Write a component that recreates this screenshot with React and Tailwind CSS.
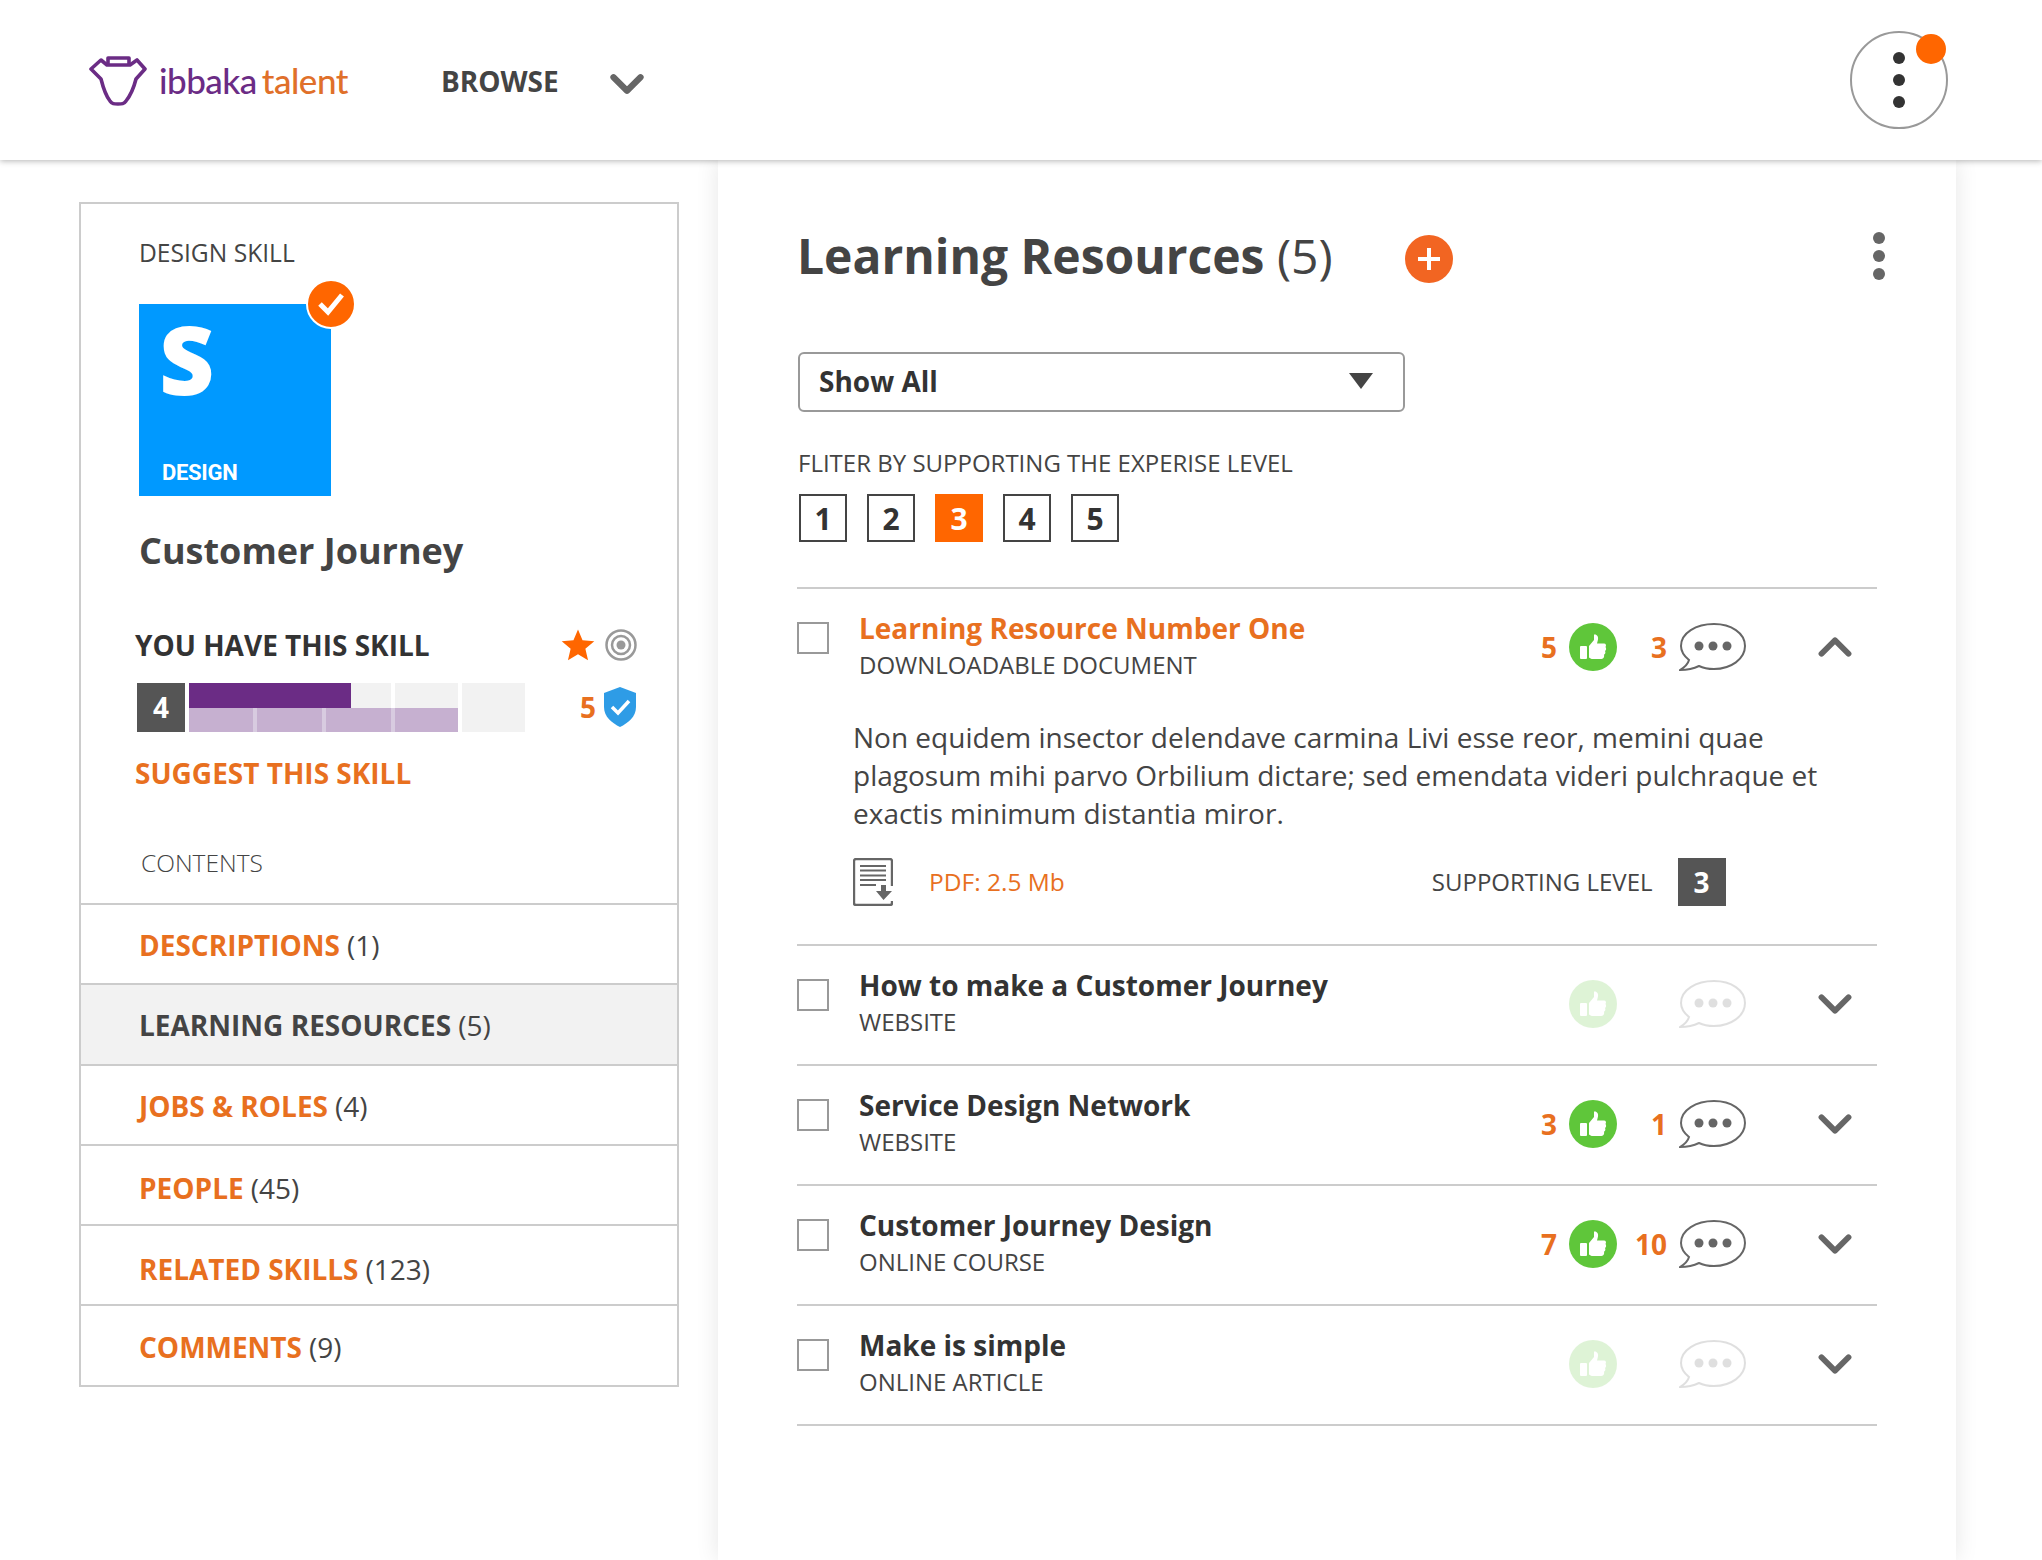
import { ChevronDown, ChevronUp } from 'lucide-react';

const Thumb = ({ muted }) => (
  <div className={`flex h-[48px] w-[48px] items-center justify-center rounded-full bg-[#5fc63a] ${muted ? 'opacity-20' : ''}`}>
    <svg width="28" height="28" viewBox="0 0 28 28" fill="#fff">
      <rect x="1" y="13" width="7" height="13" rx="1" />
      <path d="M10 13 L15 7 V1.5 C18 1 19.5 3.5 19 6.5 L18 10.5 H25 C27 10.5 27.5 12.5 26.5 14 C27.5 15.5 27.3 17 26 18 C26.8 19.5 26.3 21 25 21.8 C25.5 23.5 24.8 26 22.5 26 H14 C12 26 11 25.3 10 24.5 Z" />
    </svg>
  </div>
);

const Bubble = ({ muted }) => (
  <svg width="68" height="50" viewBox="0 0 68 50" className={muted ? 'opacity-20' : ''}>
    <path
      d="M35 2 C52 2 66 11 66 24 C66 37 52 47 35 47 C29 47 24 46 20 44 C14 47 8 48 1 48 C6 45 9 42 10 38 C5 34 2 29 2 24 C2 11 17 2 35 2 Z"
      fill="#fff"
      stroke="#666"
      strokeWidth="2"
    />
    <circle cx="20" cy="24" r="4.5" fill="#666" />
    <circle cx="34" cy="24" r="4.5" fill="#666" />
    <circle cx="48" cy="24" r="4.5" fill="#666" />
  </svg>
);

const resources = [
  { title: 'How to make a Customer Journey', type: 'WEBSITE', muted: true },
  { title: 'Service Design Network', type: 'WEBSITE', likes: 3, comments: 1 },
  { title: 'Customer Journey Design', type: 'ONLINE COURSE', likes: 7, comments: 10 },
  { title: 'Make is simple', type: 'ONLINE ARTICLE', muted: true },
];

const contents = [
  { label: 'DESCRIPTIONS', count: 1, offset: 'pt-[2px]' },
  { label: 'LEARNING RESOURCES', count: 5, active: true, offset: 'pt-[2px]' },
  { label: 'JOBS & ROLES', count: 4, offset: 'pt-[2px]' },
  { label: 'PEOPLE', count: 45, offset: 'pt-[6px]' },
  { label: 'RELATED SKILLS', count: 123, offset: 'pt-[7px]' },
  { label: 'COMMENTS', count: 9, offset: 'pt-[3px]' },
];

const ResourceRow = ({ title, type, likes, comments, muted, open }) => (
  <div className="flex h-[118px] items-start">
    <div className="mt-[33px] h-[32px] w-[32px] border-2 border-[#999]" />
    <div className="ml-[30px] pt-[21px]">
      <div className={`text-[28px] leading-[36px] font-bold ${open ? 'text-[#e8701f]' : 'text-[#333]'}`}>{title}</div>
      <div className="mt-[1px] text-[24px] leading-[36px] text-[#444]">{type}</div>
    </div>
    <div className="ml-auto mt-[31px] flex items-center pr-[15px]">
      <span className="mr-[12px] text-[28px] font-bold text-[#e8701f]">{likes}</span>
      <Thumb muted={muted} />
      <span className="mr-[12px] w-[50px] text-right text-[28px] font-bold text-[#e8701f]">{comments}</span>
      <Bubble muted={muted} />
      {open ? (
        <ChevronUp className="ml-[61px] text-[#666]" size={54} strokeWidth={2.6} />
      ) : (
        <ChevronDown className="ml-[61px] text-[#666]" size={54} strokeWidth={2.6} />
      )}
    </div>
  </div>
);

export default function App() {
  return (
    <div className="h-[1560px] overflow-hidden bg-white font-['Open_Sans',sans-serif] text-[#444]">
      {/* Header */}
      <header className="relative z-10 flex h-[160px] items-center bg-white pl-[89px] pr-[94px] shadow-[0_1px_6px_rgba(0,0,0,0.3)]">
        <svg className="mt-[1px]" width="58" height="50" viewBox="0 0 58 50" fill="none" stroke="#6b2c85" strokeWidth="3.6" strokeLinejoin="round">
          <path d="M2 13 L12 4 L18 9 H41 L48 4 L56 13 L47 23 C45 31 41 40 37 45 C35 48 33 48 29 48 C25 48 23 48 21 45 C17 40 14 31 12 23 Z" />
          <path d="M19 9 V2 H40 V9" />
        </svg>
        <div className="-mt-[1px] ml-[12px] font-['Lato',sans-serif] text-[35px] leading-[40px] font-medium tracking-[-0.5px]">
          <span className="text-[#6b2c85]">ibbaka</span>
          <span className="ml-[5px] text-[#e0702a]">talent</span>
        </div>
        <span className="ml-[93px] mt-[2px] text-[28px] font-bold text-[#444]">BROWSE</span>
        <ChevronDown className="ml-[41px] mt-[8px] text-[#666]" size={54} strokeWidth={2.8} />
        <div className="relative ml-auto flex h-[98px] w-[98px] flex-col items-center justify-center gap-[10px] rounded-full border-2 border-[#999]">
          <span className="h-[12px] w-[12px] rounded-full bg-[#333]" />
          <span className="h-[12px] w-[12px] rounded-full bg-[#333]" />
          <span className="h-[12px] w-[12px] rounded-full bg-[#333]" />
          <span className="absolute right-[0px] top-[1px] h-[30px] w-[30px] rounded-full bg-[#ff6600]" />
        </div>
      </header>

      <div className="flex items-start">
        {/* Skill sidebar */}
        <aside className="ml-[79px] mt-[42px] w-[600px] border-2 border-[#ccc]">
          <div className="pl-[58px] pt-[31px]">
            <div className="text-[24.6px] leading-[36px] text-[#444]">DESIGN SKILL</div>
            <div className="relative mt-[33px] h-[192px] w-[192px] bg-[#0099ff] pl-[20px] text-white">
              <div className="text-[96px] leading-[108px] font-extrabold">S</div>
              <div className="ml-[3px] mt-[46px] font-['Roboto',sans-serif] text-[22px] leading-[30px] font-bold tracking-[-0.3px]">DESIGN</div>
              <div className="absolute -right-[25px] -top-[25px] flex h-[50px] w-[50px] items-center justify-center rounded-full border-2 border-white bg-[#ff6600]">
                <svg width="28" height="24" viewBox="0 0 28 24" fill="none" stroke="#fff" strokeWidth="5">
                  <path d="M3 12 L11 20 L25 3" />
                </svg>
              </div>
            </div>
            <h2 className="mt-[31px] text-[36px] leading-[48px] font-bold text-[#444]">Customer Journey</h2>
          </div>

          <div className="mt-[50px] flex h-[40px] items-center pl-[54px] pr-[40px]">
            <span className="text-[28px] font-bold text-[#333]">YOU HAVE THIS SKILL</span>
            <svg className="ml-auto" width="34" height="34" viewBox="0 0 24 24" fill="#ff6600">
              <path d="M12 1 L15.2 8.6 L23.5 9.3 L17.2 14.7 L19.1 22.8 L12 18.5 L4.9 22.8 L6.8 14.7 L0.5 9.3 L8.8 8.6 Z" />
            </svg>
            <svg className="ml-[10px]" width="32" height="32" viewBox="0 0 32 32" fill="none" stroke="#999" strokeWidth="2.5">
              <circle cx="16" cy="16" r="14.5" />
              <circle cx="16" cy="16" r="9" />
              <circle cx="16" cy="16" r="4.5" fill="#999" stroke="none" />
            </svg>
          </div>

          <div className="mt-[17px] flex h-[50px] items-center pl-[56px] pr-[41px]">
            <div className="flex h-[49px] w-[48px] items-center justify-center bg-[#555] text-[28px] font-bold text-white">4</div>
            <div className="relative ml-[4px] h-[49px] w-[336px]">
              <div className="absolute bottom-0 left-0 h-[24px] w-[268px] bg-[#d8cbe0]" />
              <div className="relative grid h-full grid-cols-[64px_65px_65px_63px_63px] gap-x-[4px]">
                {[0, 1, 2, 3, 4].map((i) => (
                  <div key={i} className="flex flex-col">
                    <div className="h-[25px] bg-[#f2f2f2]" />
                    <div className={`h-[24px] ${i < 4 ? 'bg-[#c6b0d0]' : 'bg-[#f2f2f2]'}`} />
                  </div>
                ))}
              </div>
              <div className="absolute left-0 top-0 h-[25px] w-[162px] bg-[#6b2c85]" />
            </div>
            <span className="ml-auto text-[28px] font-bold text-[#e8701f]">5</span>
            <svg className="ml-[8px]" width="32" height="40" viewBox="0 0 32 40">
              <path d="M16 0 L32 6 V20 C32 30 24 36 16 40 C8 36 0 30 0 20 V6 Z" fill="#2e9ce6" />
              <path d="M8 20 L14 26 L25 14" fill="none" stroke="#fff" strokeWidth="3.5" />
            </svg>
          </div>

          <div className="mt-[22px] pl-[54px] text-[28px] leading-[38px] font-bold text-[#e8701f]">SUGGEST THIS SKILL</div>
          <div className="mt-[53px] pl-[60px] text-[24.5px] leading-[36px] font-light text-[#444]">CONTENTS</div>

          <div className="mt-[22px]">
            {contents.map((item) => (
              <div
                key={item.label}
                className={`flex h-[80.3px] items-center border-t-2 border-[#ccc] pl-[58px] text-[28px] ${item.offset} ${item.active ? 'bg-[#f2f2f2]' : ''}`}
              >
                <span className={`font-bold ${item.active ? 'text-[#444]' : 'text-[#e8701f]'}`}>{item.label}</span>
                <span className="ml-[7px] text-[#444]">({item.count})</span>
              </div>
            ))}
          </div>
        </aside>

        {/* Learning resources */}
        <main className="ml-[39px] h-[1400px] w-[1238px] pl-[79px] pr-[79px] shadow-[0_0_22px_rgba(0,0,0,0.1)]">
          <div className="flex h-[192px] items-start pt-[64px]">
            <h1 className="text-[48px] leading-[64px] text-[#444]">
              <span className="font-bold">Learning Resources</span> <span>(5)</span>
            </h1>
            <div className="ml-[72px] mt-[11px] flex h-[48px] w-[48px] items-center justify-center rounded-full bg-[#f26522]">
              <svg width="26" height="26" viewBox="0 0 26 26" stroke="#fff" strokeWidth="4"><path d="M13 2 V24 M2 13 H24" /></svg>
            </div>
            <div className="-mr-[8px] ml-auto mt-[8px] flex flex-col gap-[6px]">
              <span className="h-[12px] w-[12px] rounded-full bg-[#666]" />
              <span className="h-[12px] w-[12px] rounded-full bg-[#666]" />
              <span className="h-[12px] w-[12px] rounded-full bg-[#666]" />
            </div>
          </div>

          <div className="ml-[1px] flex h-[60px] w-[607px] items-center justify-between rounded-[6px] border-2 border-[#999] pl-[19px] pr-[30px]">
            <span className="-mt-[2px] text-[28px] font-bold text-[#333]">Show All</span>
            <svg className="-mt-[3px]" width="24" height="16" viewBox="0 0 24 16" fill="#444"><path d="M0 0 H24 L12 16 Z" /></svg>
          </div>

          <div className="ml-[1px] mt-[33px] text-[24px] leading-[36px] text-[#444]">FLITER BY SUPPORTING THE EXPERISE LEVEL</div>
          <div className="mt-[13px] flex gap-[20px] pl-[2px]">
            {[1, 2, 3, 4, 5].map((n) => (
              <div
                key={n}
                className={`flex h-[48px] w-[48px] items-center justify-center text-[30px] font-bold ${n === 3 ? 'bg-[#ff6600] text-white' : 'border-2 border-[#444] text-[#333]'}`}
              >
                {n}
              </div>
            ))}
          </div>

          <div className="mt-[45px] border-t-2 border-[#ccc]">
            <div className="border-b-2 border-[#ccc] pb-[38px]">
              <ResourceRow title="Learning Resource Number One" type="DOWNLOADABLE DOCUMENT" likes={5} comments={3} open />
              <p className="mt-[11px] w-[1031px] pl-[56px] text-[28px] leading-[38px] text-[#444]">
                Non equidem insector delendave carmina Livi esse reor, memini quae plagosum mihi parvo Orbilium dictare; sed emendata videri pulchraque et exactis minimum distantia miror.
              </p>
              <div className="mt-[26px] flex h-[48px] items-center pl-[56px]">
                <svg width="40" height="48" viewBox="0 0 40 48" fill="none" stroke="#666" strokeWidth="2.4">
                  <path d="M39 28 V3 C39 2 38 1 37 1 H3 C2 1 1 2 1 3 V45 C1 46 2 47 3 47 H37 C38 47 39 46 39 45 V43" />
                  <path d="M7 8 H33 M7 12.5 H33 M7 17.5 H33 M7 22 H33 M7 27 H23" strokeWidth="1.8" />
                  <path d="M28 27 H33 V33 H39 L30.5 42 L23 33 H28 Z" fill="#666" stroke="none" />
                </svg>
                <span className="ml-[36px] mt-[1px] text-[24.5px] font-medium text-[#e8701f]">PDF: 2.5 Mb</span>
                <span className="ml-[367px] text-[24px] text-[#444]">SUPPORTING LEVEL</span>
                <div className="ml-[25px] flex h-[48px] w-[48px] items-center justify-center bg-[#555] text-[28px] font-bold text-white">3</div>
              </div>
            </div>
            {resources.map((r) => (
              <div key={r.title} className="border-b-2 border-[#ccc]">
                <ResourceRow {...r} />
              </div>
            ))}
          </div>
        </main>
      </div>
    </div>
  );
}
